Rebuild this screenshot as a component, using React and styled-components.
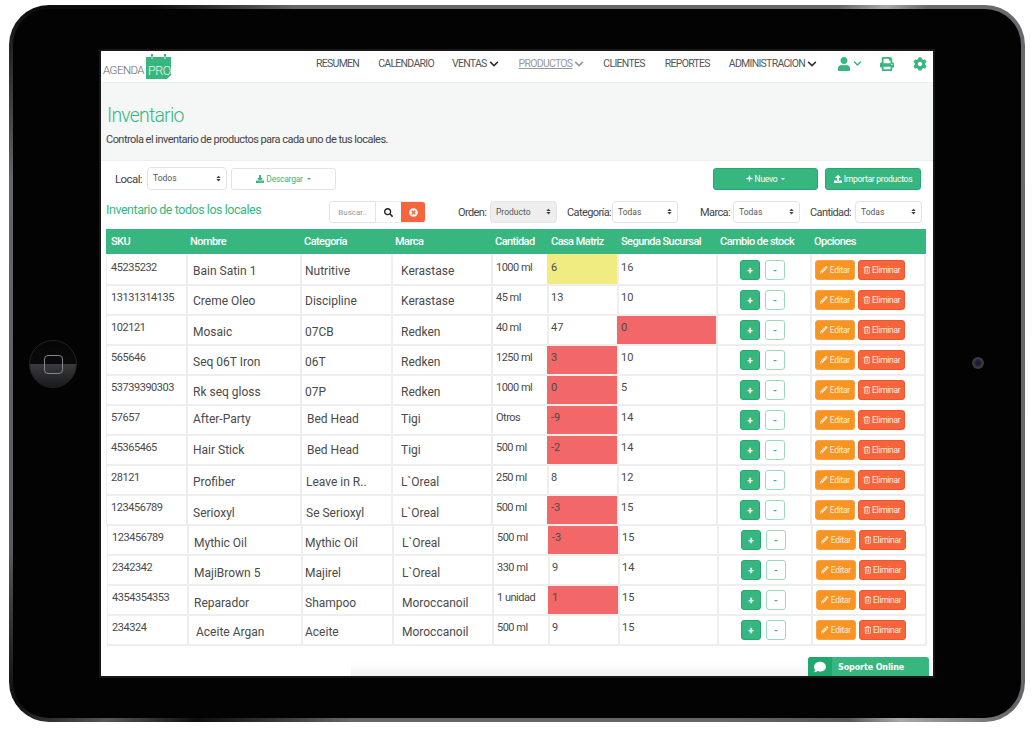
import React from "react";
import styled, { createGlobalStyle, css } from "styled-components";
import {
  FaChevronDown,
  FaCog,
  FaComment,
  FaDownload,
  FaPencilAlt,
  FaPlus,
  FaPrint,
  FaRegTrashAlt,
  FaSearch,
  FaSort,
  FaTimesCircle,
  FaUpload,
  FaUser,
} from "react-icons/fa";

const green = "#38b680";
const greenDark = "#23a970";
const line = "#eeeeee";
const text = "#555555";

const GlobalStyle = createGlobalStyle`
  html, body { margin: 0; padding: 0; background: #fff; }
  body { font-family: Roboto, "Liberation Sans", sans-serif; color: ${text}; }
  * { box-sizing: border-box; }
`;

const Stage = styled.div`
  width: 1036px;
  height: 736px;
  padding: 5px 11px 14px 9px;
`;

const Tablet = styled.div`
  position: relative;
  width: 1016px;
  height: 717px;
  padding: 4px;
  border-radius: 40px;
  background: conic-gradient(
    from 0deg at 50% 50%,
    #66666a 0deg,
    #66666a 42deg,
    #a8a8ac 46deg,
    #6a6a6e 49deg,
    #66666a 125deg,
    #a8a8ac 133deg,
    #55555a 137deg,
    #66666a 150deg,
    #66666a 205deg,
    #0e0e0e 222deg,
    #55555a 229deg,
    #0e0e0e 236deg,
    #5c5c60 250deg,
    #66666a 290deg,
    #3c3c3e 298deg,
    #0c0c0c 306deg,
    #0c0c0c 314deg,
    #66666a 328deg,
    #66666a 360deg
  );
`;

const Bezel = styled.div`
  width: 1008px;
  height: 709px;
  padding: 42px 88px;
  border-radius: 36px;
  background: #030304;
`;

const Screen = styled.div`
  position: relative;
  width: 832px;
  height: 625px;
  background: #fff;
  overflow: hidden;
  box-shadow: 0 0 0 2px #17171a;
`;

const HomeButton = styled.div`
  position: absolute;
  left: 20px;
  top: 335px;
  width: 48px;
  height: 48px;
  border-radius: 50%;
  border: 1px solid #222;
  background: linear-gradient(180deg, #060606 0, #0a0a0a 50%, #3a3b3e 50%, #1a1a1c 100%);
  display: flex;
  align-items: center;
  justify-content: center;

  &::after {
    content: "";
    width: 17px;
    height: 17px;
    border-radius: 4px;
    border: 1.5px solid #85868a;
  }
`;

const Camera = styled.div`
  position: absolute;
  left: 963px;
  top: 352px;
  width: 12px;
  height: 12px;
  border-radius: 50%;
  background: radial-gradient(circle at 50% 50%, #1b1b3a 0, #1b1b3a 25%, #3c3d40 55%, #222326 100%);
`;

const Nav = styled.nav`
  height: 32px;
  display: flex;
  align-items: center;
  border-bottom: 1px solid ${line};
  padding: 0 6px 6px 0;
`;

const Logo = styled.div`
  display: flex;
  align-items: flex-end;
  align-self: flex-start;
  margin: 3px 0 0 2px;
  height: 25px;
`;

const LogoWord = styled.span`
  font-size: 11.5px;
  font-weight: 300;
  letter-spacing: -0.55px;
  color: #666;
  width: 43px;
  line-height: 12px;
  margin-bottom: 3px;
`;

const LogoMark = styled.div`
  position: relative;
  width: 25px;
  height: 25px;

  svg {
    position: absolute;
    inset: 0;
  }
`;

const LogoPro = styled.span`
  position: absolute;
  left: 2px;
  bottom: 2px;
  font-size: 12.5px;
  font-weight: 300;
  line-height: 13px;
  letter-spacing: -0.4px;
  color: #e6f7ef;
`;

const NavLinks = styled.div`
  margin-left: auto;
  display: flex;
  align-items: center;
`;

const NavLink = styled.a`
  display: flex;
  align-items: center;
  gap: 2px;
  font-size: 10.5px;
  letter-spacing: -0.72px;
  margin-left: ${(p) => p.$ml}px;
  color: ${(p) => (p.$active ? "#999" : text)};
  text-decoration: ${(p) => (p.$active ? "underline" : "none")};

  svg {
    color: ${(p) => (p.$active ? "#999" : "#333")};
    font-size: 10px;
  }
`;

const NavIcon = styled.span`
  display: flex;
  align-items: center;
  gap: 2px;
  margin-left: ${(p) => p.$ml}px;
  color: ${green};
  font-size: 14px;
`;

const PageHeader = styled.header`
  height: 78px;
  padding: 22px 5px 0;
  background: #f5f6f6;
  border-bottom: 1px solid ${line};
`;

const Title = styled.h1`
  margin: 0 0 0 1px;
  font-size: 19.5px;
  font-weight: 300;
  line-height: 22px;
  letter-spacing: -0.8px;
  color: ${green};
`;

const Subtitle = styled.p`
  margin: 6px 0 0;
  font-size: 11px;
  line-height: 14px;
  letter-spacing: -0.53px;
  color: #444;
`;

const ToolRow = styled.div`
  display: flex;
  align-items: center;
  height: ${(p) => p.$h}px;
  margin-top: ${(p) => p.$mt}px;
  padding: ${(p) => p.$pad};
`;

const Label = styled.span`
  font-size: ${(p) => p.$size || 11}px;
  margin-right: ${(p) => p.$mr || 0}px;
  letter-spacing: -0.6px;
  color: #444;
  white-space: nowrap;
`;

const SelectBox = styled.div`
  width: ${(p) => p.$w}px;
  height: ${(p) => p.$h || 22}px;
  padding: 0 4px 1px 5px;
  display: flex;
  align-items: center;
  justify-content: space-between;
  flex: none;
  border: 1px solid #e3e3e3;
  border-radius: 4px;
  background: ${(p) => (p.$muted ? "#eeeeee" : "#fff")};
  font-size: 8.5px;
  color: #555;

  svg {
    font-size: 7px;
    color: #444;
  }
`;

const buttonBase = css`
  display: flex;
  align-items: center;
  justify-content: center;
  gap: 2px;
  border-radius: 3px;
  font-size: 8.5px;
  letter-spacing: -0.25px;
  flex: none;
`;

const Caret = styled.i`
  width: 0;
  height: 0;
  margin-left: 2px;
  border: 2px solid transparent;
  border-top: 2.5px solid currentColor;
  border-bottom: 0;
`;

const OutlineButton = styled.div`
  ${buttonBase}
  width: 105px;
  height: 22px;
  margin-left: 4px;
  border: 1px solid #e3e3e3;
  color: ${green};
  background: #fff;
`;

const SolidButton = styled.div`
  ${buttonBase}
  width: ${(p) => p.$w}px;
  height: 22px;
  margin-left: ${(p) => p.$ml}px;
  background: ${green};
  border: 1px solid ${greenDark};
  color: #fff;
`;

const Heading = styled.h2`
  margin: 0;
  width: 223px;
  flex: none;
  transform: translateY(-3px);
  font-size: 12.5px;
  font-weight: 400;
  letter-spacing: -0.45px;
  color: ${green};
`;

const SearchGroup = styled.div`
  display: flex;
  height: 22px;
  width: 96px;
  flex: none;
`;

const SearchInput = styled.div`
  width: 47px;
  display: flex;
  align-items: center;
  justify-content: center;
  border: 1px solid #e3e3e3;
  border-radius: 3px 0 0 3px;
  font-size: 8px;
  color: #999;
`;

const SearchButton = styled.div`
  width: ${(p) => p.$w}px;
  display: flex;
  align-items: center;
  justify-content: center;
  font-size: 9px;
  border-radius: ${(p) => (p.$clear ? "0 3px 3px 0" : "0")};
  border-top: 1px solid #eee;
  border-bottom: 1px solid #eee;
  background: ${(p) => (p.$clear ? "#f5643a" : "#fff")};
  color: ${(p) => (p.$clear ? "#fff" : "#222")};
`;

const Filter = styled.div`
  width: ${(p) => p.$w}px;
  margin-left: ${(p) => p.$ml}px;
  flex: none;
  display: flex;
  align-items: center;
  justify-content: space-between;
`;

const TableBox = styled.div`
  margin: 6px 0 0 5px;
  width: 820px;
`;

const HeadRow = styled.div`
  display: grid;
  grid-template-columns: 80px 114px 91px 100px 56px 70px 99px 94px 115px;
  height: 25px;
  background: ${green};
  color: #fff;
  font-size: 11px;
  font-weight: 500;
  letter-spacing: -0.55px;
`;

const HeadCell = styled.div`
  display: flex;
  align-items: center;
  padding-left: ${(p) => p.$pl}px;
`;

const Row = styled.div`
  display: grid;
  grid-template-columns: 80px 114px 91px 100px 56px 70px 99px 94px 114px;
  height: ${(p) => p.$h}px;
  margin-left: ${(p) => p.$shift}px;
`;

const Cell = styled.div`
  box-shadow: 2px 0 0 ${line};
  border-bottom: 2px solid ${line};
  padding-left: ${(p) => p.$pl}px;
  padding-top: ${(p) => p.$pt}px;
  font-size: ${(p) => p.$size}px;
  line-height: 14px;
  letter-spacing: ${(p) => p.$track || 0}px;
  color: #4a4a4a;
  white-space: nowrap;
  background: ${(p) => p.$bg || "transparent"};

  &:first-child {
    border-left: 1px solid ${line};
  }
`;

const ActionCell = styled.div`
  box-shadow: 2px 0 0 ${line};
  border-bottom: 2px solid ${line};
  display: flex;
  gap: ${(p) => p.$gap}px;
  padding-left: ${(p) => p.$pl}px;
  padding-top: ${(p) => p.$pt}px;
`;

const StepButton = styled.div`
  width: 20px;
  height: 20px;
  display: flex;
  align-items: center;
  justify-content: center;
  border-radius: 3px;
  font-size: 10px;
  font-weight: 700;
  border: 1px solid ${(p) => (p.$plus ? greenDark : "#9ad9bd")};
  background: ${(p) => (p.$plus ? green : "#fff")};
  color: ${(p) => (p.$plus ? "#fff" : green)};
`;

const OptionButton = styled.div`
  ${buttonBase}
  width: ${(p) => p.$w}px;
  height: 20px;
  background: ${(p) => p.$bg};
  border: 1px solid ${(p) => p.$edge};
  color: #fdeee0;
  letter-spacing: -0.3px;

  svg {
    font-size: 7.5px;
  }
`;

const FooterFade = styled.div`
  position: absolute;
  left: 250px;
  right: 0;
  bottom: 0;
  height: 14px;
  background: linear-gradient(180deg, rgba(240, 240, 240, 0), #f2f2f2);
`;

const Support = styled.div`
  position: absolute;
  right: 4px;
  bottom: -4px;
  width: 121px;
  height: 23px;
  display: flex;
  border-radius: 3px 3px 0 0;
  overflow: hidden;
  background: ${green};
  color: #fff;
`;

const SupportIcon = styled.div`
  width: 24px;
  padding-top: 4px;
  display: flex;
  justify-content: center;
  background: #1fa86d;
  font-size: 12px;
`;

const SupportLabel = styled.div`
  padding: 6px 0 0 6px;
  font-family: "DejaVu Sans", sans-serif;
  font-size: 8px;
  letter-spacing: -0.1px;
  font-weight: 700;
`;

const products = [
  { sku: "45235232", name: "Bain Satin 1", cat: "Nutritive", brand: "Kerastase", qty: "1000 ml", hq: "6", branch: "16", hqTone: "warn", h: 32, dy: 10, nx: 7, cx: 5 },
  { sku: "13131314135", name: "Creme Oleo", cat: "Discipline", brand: "Kerastase", qty: "45 ml", hq: "13", branch: "10", h: 30, dy: 8, nx: 7, cx: 5 },
  { sku: "102121", name: "Mosaic", cat: "07CB", brand: "Redken", qty: "40 ml", hq: "47", branch: "0", branchTone: "low", h: 30, dy: 9, nx: 7, cx: 5 },
  { sku: "565646", name: "Seq 06T Iron", cat: "06T", brand: "Redken", qty: "1250 ml", hq: "3", branch: "10", hqTone: "low", h: 30, dy: 9, nx: 7, cx: 5 },
  { sku: "53739390303", name: "Rk seq gloss", cat: "07P", brand: "Redken", qty: "1000 ml", hq: "0", branch: "5", hqTone: "low", h: 30, dy: 9, nx: 7, cx: 5 },
  { sku: "57657", name: "After-Party", cat: "Bed Head", brand: "Tigi", qty: "Otros", hq: "-9", branch: "14", hqTone: "low", h: 30, dy: 6, nx: 7, cx: 7 },
  { sku: "45365465", name: "Hair Stick", cat: "Bed Head", brand: "Tigi", qty: "500 ml", hq: "-2", branch: "14", hqTone: "low", h: 30, dy: 7, nx: 7, cx: 7 },
  { sku: "28121", name: "Profiber", cat: "Leave in R..", brand: "L`Oreal", qty: "250 ml", hq: "8", branch: "12", h: 30, dy: 9, nx: 7, cx: 6 },
  { sku: "123456789", name: "Serioxyl", cat: "Se Serioxyl", brand: "L`Oreal", qty: "500 ml", hq: "-3", branch: "15", hqTone: "low", h: 30, dy: 10, nx: 7, cx: 6 },
  { sku: "123456789", name: "Mythic Oil", cat: "Mythic Oil", brand: "L`Oreal", qty: "500 ml", hq: "-3", branch: "15", hqTone: "low", h: 30, dy: 10, nx: 7, cx: 4, shift: 1 },
  { sku: "2342342", name: "MajiBrown 5", cat: "Majirel", brand: "L`Oreal", qty: "330 ml", hq: "9", branch: "14", h: 30, dy: 10, nx: 7, cx: 4, shift: 1 },
  { sku: "4354354353", name: "Reparador", cat: "Shampoo", brand: "Moroccanoil", qty: "1 unidad", hq: "1", branch: "15", hqTone: "low", h: 30, dy: 10, nx: 7, cx: 4, shift: 1 },
  { sku: "234324", name: "Aceite Argan", cat: "Aceite", brand: "Moroccanoil", qty: "500 ml", hq: "9", branch: "15", h: 30, dy: 9, nx: 9, cx: 4, shift: 1 },
];

const tones = { warn: "#f0ec82", low: "#f26768" };

const heads = [
  ["SKU", 5],
  ["Nombre", 4],
  ["Categoría", 4],
  ["Marca", 4],
  ["Cantidad", 4],
  ["Casa Matriz", 4],
  ["Segunda Sucursal", 4],
  ["Cambio de stock", 4],
  ["Opciones", 4],
];

const LogoShape = () => (
  <svg width="25" height="25" viewBox="0 0 25 25">
    <path d="M0 3h25v18l-4 4H0z" fill={green} />
    <path d="M6 0v6M19 0v6" stroke={green} strokeWidth="2" />
    <path d="M6 2v3M19 2v3" stroke="#fff" strokeWidth="0.8" />
  </svg>
);

const App = () => (
  <>
    <GlobalStyle />
    <Stage>
      <Tablet>
        <Bezel>
          <Screen>
            <Nav>
              <Logo>
                <LogoWord>AGENDA</LogoWord>
                <LogoMark>
                  <LogoShape />
                  <LogoPro>PRO</LogoPro>
                </LogoMark>
              </Logo>
              <NavLinks>
                <NavLink $ml={0}>RESUMEN</NavLink>
                <NavLink $ml={19}>CALENDARIO</NavLink>
                <NavLink $ml={18}>
                  VENTAS <FaChevronDown />
                </NavLink>
                <NavLink $ml={20} $active>
                  PRODUCTOS <FaChevronDown />
                </NavLink>
                <NavLink $ml={19}>CLIENTES</NavLink>
                <NavLink $ml={20}>REPORTES</NavLink>
                <NavLink $ml={19}>
                  ADMINISTRACION <FaChevronDown />
                </NavLink>
                <NavIcon $ml={20}>
                  <FaUser />
                  <FaChevronDown size={9} />
                </NavIcon>
                <NavIcon $ml={18}>
                  <FaPrint />
                </NavIcon>
                <NavIcon $ml={19}>
                  <FaCog />
                </NavIcon>
              </NavLinks>
            </Nav>
            <PageHeader>
              <Title>Inventario</Title>
              <Subtitle>Controla el inventario de productos para cada uno de tus locales.</Subtitle>
            </PageHeader>
            <ToolRow $h={23} $mt={6} $pad="0 12px 0 14px">
              <Label $size={11.5} $mr={5}>Local:</Label>
              <SelectBox $w={80} $h={23}>
                Todos <FaSort />
              </SelectBox>
              <OutlineButton>
                <FaDownload size={8} /> Descargar <Caret />
              </OutlineButton>
              <SolidButton $w={105} $ml={377}>
                <FaPlus size={7} /> Nuevo <Caret />
              </SolidButton>
              <SolidButton $w={96} $ml={7}>
                <FaUpload size={8} /> Importar productos
              </SolidButton>
            </ToolRow>
            <ToolRow $h={22} $mt={11} $pad="0 0 0 5px">
              <Heading>Inventario de todos los locales</Heading>
              <SearchGroup>
                <SearchInput>Buscar..</SearchInput>
                <SearchButton $w={25}>
                  <FaSearch />
                </SearchButton>
                <SearchButton $w={24} $clear>
                  <FaTimesCircle />
                </SearchButton>
              </SearchGroup>
              <Filter $w={99} $ml={33}>
                <Label>Orden:</Label>
                <SelectBox $w={67} $muted>
                  Producto <FaSort />
                </SelectBox>
              </Filter>
              <Filter $w={111} $ml={10}>
                <Label>Categoría:</Label>
                <SelectBox $w={66}>
                  Todas <FaSort />
                </SelectBox>
              </Filter>
              <Filter $w={100} $ml={22}>
                <Label>Marca:</Label>
                <SelectBox $w={67}>
                  Todas <FaSort />
                </SelectBox>
              </Filter>
              <Filter $w={112} $ml={10}>
                <Label>Cantidad:</Label>
                <SelectBox $w={67}>
                  Todas <FaSort />
                </SelectBox>
              </Filter>
            </ToolRow>
            <TableBox>
              <HeadRow>
                {heads.map(([label, pl]) => (
                  <HeadCell key={label} $pl={pl}>
                    {label}
                  </HeadCell>
                ))}
              </HeadRow>
              {products.map((p, i) => {
                const top = i === 0 ? 7 : 5;
                return (
                  <Row key={i} $h={p.h} $shift={p.shift || 0}>
                    <Cell $pl={4} $pt={top} $size={11} $track={-0.45}>{p.sku}</Cell>
                    <Cell $pl={p.nx} $pt={p.dy} $size={12}>{p.name}</Cell>
                    <Cell $pl={p.cx} $pt={p.dy} $size={12}>{p.cat}</Cell>
                    <Cell $pl={10} $pt={p.dy} $size={12}>{p.brand}</Cell>
                    <Cell $pl={5} $pt={top} $size={11} $track={-0.5}>{p.qty}</Cell>
                    <Cell $pl={4} $pt={top} $size={11} $bg={tones[p.hqTone]}>{p.hq}</Cell>
                    <Cell $pl={4} $pt={top} $size={11} $bg={tones[p.branchTone]}>{p.branch}</Cell>
                    <ActionCell $pl={24} $gap={5} $pt={top - 1}>
                      <StepButton $plus>+</StepButton>
                      <StepButton>-</StepButton>
                    </ActionCell>
                    <ActionCell $pl={5} $gap={3} $pt={top - 1}>
                      <OptionButton $w={40} $bg="#f8941f" $edge="#f5a34a">
                        <FaPencilAlt /> Editar
                      </OptionButton>
                      <OptionButton $w={47} $bg="#f5643a" $edge="#f0562c">
                        <FaRegTrashAlt /> Eliminar
                      </OptionButton>
                    </ActionCell>
                  </Row>
                );
              })}
            </TableBox>
            <FooterFade />
            <Support>
              <SupportIcon>
                <FaComment />
              </SupportIcon>
              <SupportLabel>Soporte Online</SupportLabel>
            </Support>
          </Screen>
        </Bezel>
        <HomeButton />
        <Camera />
      </Tablet>
    </Stage>
  </>
);

export default App;
